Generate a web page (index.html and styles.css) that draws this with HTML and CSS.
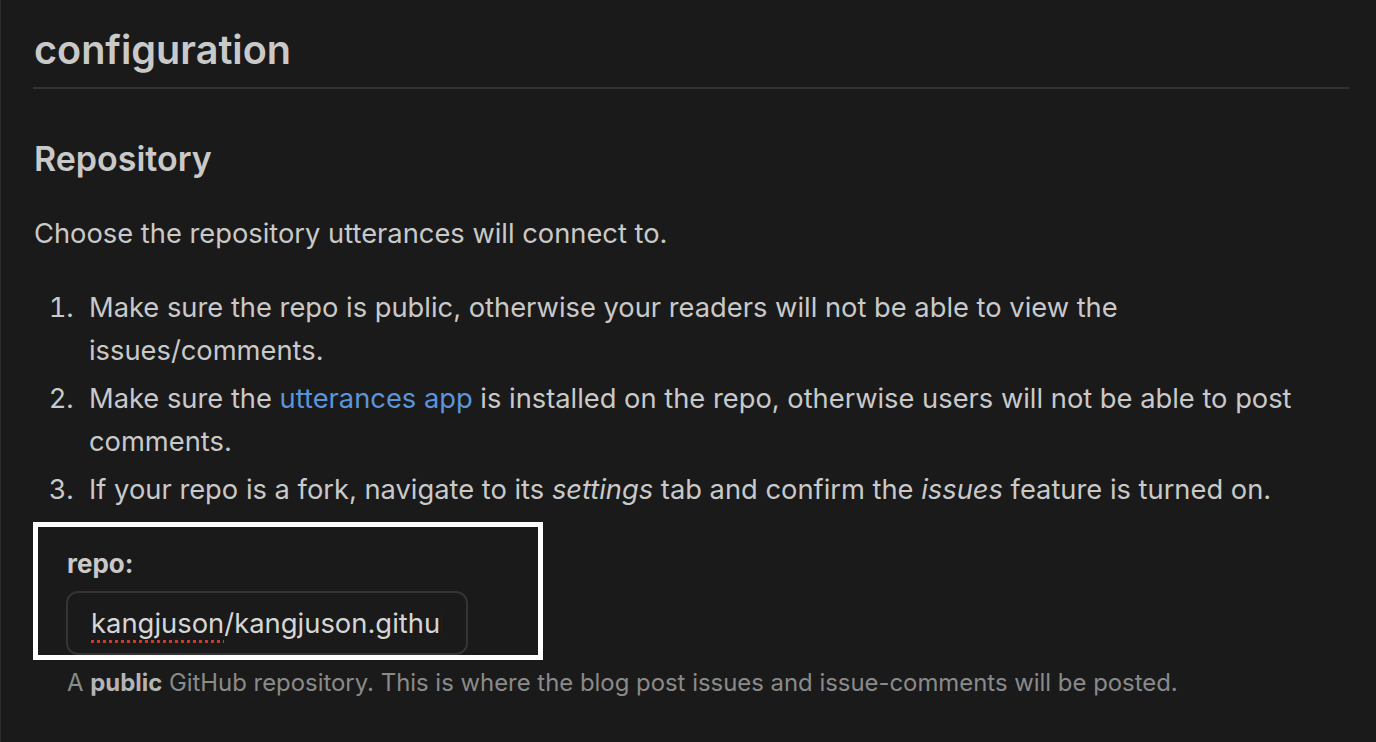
FILE: index.html
```html
<!DOCTYPE html>
<html lang="en">
<head>
<meta charset="utf-8">
<title>configuration</title>
<link rel="stylesheet" href="styles.css">
</head>
<body>
<main class="page">
  <h1 class="title">configuration</h1>
  <h3 class="section-title">Repository</h3>
  <p class="lead">Choose the repository utterances will connect to.</p>
  <ol class="steps">
    <li>Make sure the repo is public, otherwise your readers will not be able to view the issues/comments.</li>
    <li>Make sure the <a class="link" href="#">utterances app</a> is installed on the repo, otherwise users will not be able to post comments.</li>
    <li>If your repo is a fork, navigate to its <em>settings</em> tab and confirm the <em>issues</em> feature is turned on.</li>
  </ol>
  <div class="highlight">
    <label class="field-label">repo:</label>
    <div class="field-input"><div class="field-value"><span class="misspelled">kangjuson</span>/kangjuson.github.io</div></div>
  </div>
  <p class="note">A <strong>public</strong> GitHub repository. This is where the blog post issues and issue-comments will be posted.</p>
</main>
</body>
</html>
```

FILE: styles.css
```css
html, body {
  margin: 0;
  padding: 0;
  background: #1a1a1a;
}
body {
  font-family: Inter, "Noto Sans", "Liberation Sans", sans-serif;
  color: #c9c9c9;
  border-left: 1px solid #2c2c2c;
  min-height: 742px;
  box-sizing: border-box;
}
.page {
  padding: 0 27px 0 32px;
}
.title {
  margin: 0;
  padding-top: 25px;
  padding-bottom: 12px;
  padding-left: 1px;
  font-size: 39.6px;
  font-weight: 600;
  line-height: 50px;
  border-bottom: 2px solid #2f3338;
  color: #c9c9c9;
}
.section-title {
  margin: 50px 0 0;
  padding-left: 1px;
  font-size: 34px;
  font-weight: 600;
  line-height: 40px;
}
.lead {
  margin: 34px 0 0;
  padding-left: 1px;
  font-size: 27.3px;
  line-height: 42px;
}
.steps {
  margin: 31px 0 0;
  padding-left: 48px;
  padding-right: 40px;
  font-size: 27.3px;
  line-height: 43px;
}
.steps li {
  padding-left: 8px;
}
.steps li + li {
  margin-top: 5px;
}
.steps li::marker {
  color: #c9c9c9;
}
.link {
  color: #5a95dc;
  text-decoration: none;
}
.highlight {
  margin-top: 11px;
  width: 510px;
  height: 138px;
  box-sizing: border-box;
  border: 5px solid #ffffff;
  padding: 20px 0 0 28px;
  overflow: hidden;
}
.field-label {
  display: block;
  font-size: 26px;
  font-weight: 700;
  line-height: 34px;
  padding-left: 1px;
}
.field-input {
  margin-top: 10px;
  width: 402px;
  height: 64px;
  box-sizing: border-box;
  border: 2px solid #343434;
  border-radius: 12px;
  padding: 0 24px 0 23px;
  color: #d6d6d6;
}
.field-value {
  font-size: 27.4px;
  line-height: 60px;
  white-space: nowrap;
  overflow: hidden;
}
.misspelled {
  text-decoration: underline dotted #d0382b;
  text-decoration-thickness: 3px;
  text-underline-offset: 7px;
}
.note {
  margin: 7px 0 0 34px;
  font-size: 23.9px;
  line-height: 32px;
  color: #8a8a8a;
}
.note strong {
  color: #b4b4b4;
}
```
